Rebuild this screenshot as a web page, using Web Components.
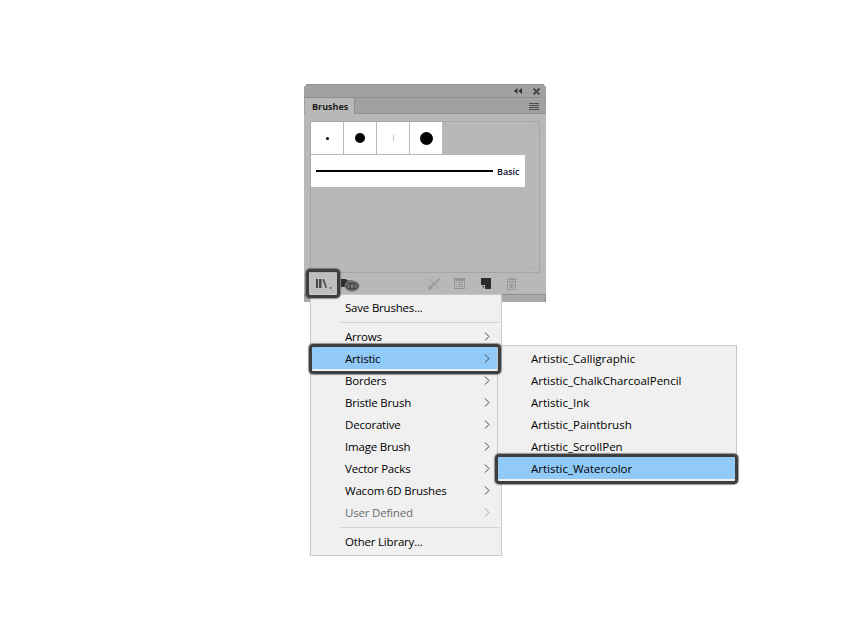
<!DOCTYPE html>
<html>
<head>
<meta charset="utf-8">
<title>Brushes</title>
<style>
    html, body { margin: 0; background: #fff; }
    body { width: 850px; height: 640px; overflow: hidden; position: relative; font-family: "Open Sans", "Noto Sans", sans-serif; }
</style>
</head>
<body>
<brush-panel style="left:304px;top:84px"></brush-panel>
<fly-menu id="mainMenu" style="left:310px;top:294px;width:192px;--indent:34px;--track:-0.2px">
    <menu-row>Save Brushes...</menu-row>
    <menu-sep></menu-sep>
    <menu-row arrow>Arrows</menu-row>
    <menu-row arrow active>Artistic</menu-row>
    <menu-row arrow>Borders</menu-row>
    <menu-row arrow>Bristle Brush</menu-row>
    <menu-row arrow>Decorative</menu-row>
    <menu-row arrow>Image Brush</menu-row>
    <menu-row arrow>Vector Packs</menu-row>
    <menu-row arrow>Wacom 6D Brushes</menu-row>
    <menu-row arrow disabled>User Defined</menu-row>
    <menu-sep></menu-sep>
    <menu-row>Other Library...</menu-row>
</fly-menu>
<fly-menu id="subMenu" style="left:497px;top:345px;width:240px;--indent:33px;--track:0px">
    <menu-row>Artistic_Calligraphic</menu-row>
    <menu-row>Artistic_ChalkCharcoalPencil</menu-row>
    <menu-row>Artistic_Ink</menu-row>
    <menu-row>Artistic_Paintbrush</menu-row>
    <menu-row>Artistic_ScrollPen</menu-row>
    <menu-row active>Artistic_Watercolor</menu-row>
</fly-menu>
<focus-ring style="left:306px;top:269px;width:34px;height:29px;background:rgba(255,255,255,0.1)"></focus-ring>
<focus-ring style="left:309px;top:344px;width:192px;height:30px"></focus-ring>
<focus-ring style="left:495px;top:454px;width:243px;height:30px"></focus-ring>

<script>
class BrushPanel extends HTMLElement {
    constructor() {
        super();
        this.attachShadow({mode:'open'});
        this.shadowRoot.innerHTML = `
            <style>
                :host {
                    position: absolute;
                    width: 242px;
                    height: 218px;
                    display: flex;
                    flex-direction: column;
                    background: #b8b8b8;
                    font-family: "Open Sans", "Noto Sans", sans-serif;
                    clip-path: polygon(3px 0, calc(100% - 3px) 0, 100% 3px, 100% 100%, 0 100%, 0 3px);
                }
                #title {
                    height: 13px;
                    background: #a1a1a1;
                    border-top: 1px solid #8f8f8f;
                    display: flex;
                    justify-content: flex-end;
                    align-items: center;
                    gap: 11px;
                    padding-right: 6px;
                    box-sizing: border-box;
                }
                #tabs {
                    height: 17px;
                    background: #a1a1a1;
                    border-top: 1px solid #8f8f8f;
                    border-bottom: 1px solid #8f8f8f;
                    box-sizing: border-box;
                    display: flex;
                    justify-content: space-between;
                    padding: 0 7px 0 1px;
                    align-items: stretch;
                }
                #tab {
                    width: 50px;
                    background: #b8b8b8;
                    margin-bottom: -1px;
                    border-right: 1px solid #8f8f8f;
                    box-sizing: border-box;
                    font-size: 9px;
                    font-weight: 700;
                    color: #1c1c1c;
                    padding-left: 7px;
                    line-height: 17px;
                }
                #menuIcon { align-self: flex-start; margin-top: 5px; }
                #list {
                    margin: 7px 6px 0;
                    height: 152px;
                    box-sizing: border-box;
                    border: 1px solid #a6a6a6;
                    display: flex;
                    flex-direction: column;
                    gap: 1px;
                    position: relative;
                }
                #swatches { display: flex; gap: 1px; }
                .swatch {
                    width: 32px;
                    height: 32px;
                    background: #fff;
                    display: flex;
                    align-items: center;
                    justify-content: center;
                }
                .dot { border-radius: 50%; background: #000; }
                #line {
                    width: 214px;
                    height: 32px;
                    background: #fff;
                    display: flex;
                    align-items: center;
                    box-sizing: border-box;
                    padding-left: 5px;
                    gap: 4px;
                    font-size: 9px;
                    font-weight: 600;
                    color: #10103a;
                }
                #line i { display: block; width: 177px; height: 2px; background: #000; }
                .scroll { position: absolute; right: 2px; }
                #foot {
                    height: 21px;
                    position: relative;
                }
                #foot svg { position: absolute; top: 5px; }
                #strip {
                    flex: 1;
                    background: #a8a8a8;
                    border-top: 1px solid #8f8f8f;
                    border-right: 1px solid #8f8f8f;
                    box-sizing: border-box;
                }
            </style>
            <div id="title">
                <svg width="8" height="6" viewBox="0 0 8 6"><path d="M3.500 0v6L0 3zM8 0v6L4.500 3z" fill="#333"/></svg>
                <svg width="7" height="7" viewBox="0 0 7 7"><path d="M.5.5l6 6M6.500.5l-6 6" stroke="#4a4a4a" stroke-width="2"/></svg>
            </div>
            <div id="tabs">
                <div id="tab">Brushes</div>
                <svg id="menuIcon" width="10" height="8" viewBox="0 0 10 8"><path d="M0 .5h10M0 2.500h10M0 4.500h10M0 6.500h10" stroke="#4c4c4c"/></svg>
            </div>
            <div id="list">
                <div id="swatches">
                    <div class="swatch"><span class="dot" style="width:3px;height:3px"></span></div>
                    <div class="swatch"><span class="dot" style="width:10px;height:10px"></span></div>
                    <div class="swatch"><span style="width:1px;height:6px;background:#c4c4c4"></span></div>
                    <div class="swatch"><span class="dot" style="width:13px;height:13px"></span></div>
                </div>
                <div id="line"><i></i>Basic</div>
                <svg class="scroll" style="top:2px" width="9" height="5" viewBox="0 0 9 5"><path d="M1 4.500L4.500 1 8 4.500" fill="none" stroke="#a8a8a8"/></svg>
                <svg class="scroll" style="bottom:2px" width="9" height="5" viewBox="0 0 9 5"><path d="M1 .5L4.500 4 8 .5" fill="none" stroke="#a8a8a8"/></svg>
            </div>
            <div id="foot">
                <!-- libraries -->
                <svg style="left:12px;top:6px" width="16" height="11" viewBox="0 0 16 11"><path d="M0 0h2v9H0zM3 0h2.500v9H3z" fill="#333"/><path d="M6.500.5L8 0l3 8.500-1.500.5z" fill="#333"/><path d="M13 8.500h3L14.500 10z" fill="#333"/></svg>
                <!-- cloud libraries -->
                <svg style="left:36px;top:5px" width="20" height="14" viewBox="0 0 20 14"><path d="M1 1h5l1 1.500h6V9H1z" fill="#2e2e2e"/><ellipse cx="12" cy="8" rx="7.500" ry="5.500" fill="#747474"/><ellipse cx="10.500" cy="8" rx="4" ry="3" fill="none" stroke="#3a3a3a"/><ellipse cx="13.500" cy="8" rx="4" ry="3" fill="none" stroke="#3a3a3a"/></svg>
                <!-- remove stroke -->
                <svg style="left:124px" width="12" height="12" viewBox="0 0 12 12"><path d="M.5 .5l11 11" stroke="#9c9c9c"/><path d="M11.500.5L4 8" stroke="#9c9c9c" stroke-width="2"/><path d="M0 12c0-3 1-5 3-5l2 2c0 2-2 3-5 3z" fill="#9c9c9c"/></svg>
                <!-- options -->
                <svg style="left:150px" width="11" height="11" viewBox="0 0 11 11"><rect x=".5" y=".5" width="10" height="10" fill="none" stroke="#969696"/><path d="M0 2h11" stroke="#969696" stroke-width="2"/><path d="M2 4.500h1M2 6.500h1M2 8.500h1M4 4.500h5M4 6.500h5M4 8.500h5" stroke="#969696"/></svg>
                <!-- new brush -->
                <svg style="left:177px" width="10" height="11" viewBox="0 0 10 11"><path d="M0 0h10v11H4V7H0z" fill="#2c2c2c"/><path d="M1 8h2v2z" fill="#2c2c2c"/></svg>
                <!-- trash -->
                <svg style="left:202px" width="11" height="12" viewBox="0 0 11 12"><path d="M0 1.500h11M4 1.500V.5h3v1" fill="none" stroke="#969696"/><path d="M1.500 3.500h8v8h-8zM4 5v5M5.500 5v5M7 5v5" fill="none" stroke="#969696"/></svg>
            </div>
            <div id="strip"></div>
        `;
    }
}

class FlyMenu extends HTMLElement {
    constructor() {
        super();
        this.attachShadow({mode:'open'});
        this.shadowRoot.innerHTML = `
            <style>
                :host {
                    position: absolute;
                    display: block;
                    box-sizing: border-box;
                    padding: 1px 0 3px;
                    background: #f0f0f0;
                    border: 1px solid #c8c8c8;
                    font-family: "Open Sans", "Noto Sans", sans-serif;
                }
            </style>
            <slot></slot>
        `;
    }
}

class MenuRow extends HTMLElement {
    constructor() {
        super();
        this.attachShadow({mode:'open'});
        this.shadowRoot.innerHTML = `
            <style>
                :host {
                    display: flex;
                    align-items: center;
                    justify-content: space-between;
                    height: 22px;
                    padding-left: var(--indent);
                    padding-right: 11px;
                    font-size: 11.5px;
                    letter-spacing: var(--track);
                    color: #000;
                    white-space: nowrap;
                }
                :host([active]) { background: #91c9f7; }
                :host([disabled]) { color: #6d6d6d; }
                svg { display: none; }
                :host([arrow]) svg { display: block; }
                :host([disabled]) path { stroke: #a0a0a0; }
            </style>
            <span><slot></slot></span>
            <svg width="6" height="9" viewBox="0 0 6 9"><path d="M1 .5l4 4-4 4" fill="none" stroke="#444"/></svg>
        `;
    }
}

class MenuSep extends HTMLElement {
    constructor() {
        super();
        this.attachShadow({mode:'open'});
        this.shadowRoot.innerHTML = `
            <style>
                :host { display: block; height: 7px; padding-left: 30px; padding-right: 2px; }
                div { height: 4px; border-bottom: 1px solid #d0d0d0; }
            </style>
            <div></div>
        `;
    }
}

class FocusRing extends HTMLElement {
    constructor() {
        super();
        this.attachShadow({mode:'open'});
        this.shadowRoot.innerHTML = `
            <style>
                :host {
                    position: absolute;
                    box-sizing: border-box;
                    border: 3px solid #3e3e3e;
                    border-radius: 4px;
                    box-shadow: 0 0 1px 1px rgba(70,70,70,0.55);
                }
            </style>
        `;
    }
}

customElements.define('brush-panel', BrushPanel);
customElements.define('fly-menu', FlyMenu);
customElements.define('menu-row', MenuRow);
customElements.define('menu-sep', MenuSep);
customElements.define('focus-ring', FocusRing);
</script>
</body>
</html>
